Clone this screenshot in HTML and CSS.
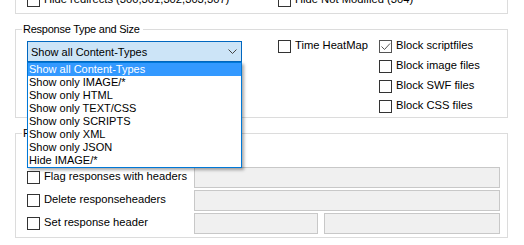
FILE: index.html
```html
<!DOCTYPE html>
<html>
<head>
<meta charset="utf-8">
<link rel="stylesheet" href="styles.css">
</head>
<body>
<div class="page">
  <div class="group-top">
    <label class="cb-label col-a"><span class="cb"></span><span class="txt">Hide redirects (300,301,302,303,307)</span></label>
    <label class="cb-label"><span class="cb"></span><span class="txt">Hide Not Modified (304)</span></label>
  </div>

  <fieldset class="group">
    <legend>Response Type and Size</legend>
    <div class="rts-body">
      <div class="combo-wrap">
        <div class="combo">
          <span>Show all Content-Types</span>
          <svg class="chev" width="9" height="5" viewBox="0 0 9 5"><polyline points="0.5,0.5 4.5,4.5 8.5,0.5" fill="none" stroke="#444" stroke-width="1"/></svg>
        </div>
        <ul class="dropdown">
          <li class="sel">Show all Content-Types</li>
          <li>Show only IMAGE/*</li>
          <li>Show only HTML</li>
          <li>Show only TEXT/CSS</li>
          <li>Show only SCRIPTS</li>
          <li>Show only XML</li>
          <li>Show only JSON</li>
          <li>Hide IMAGE/*</li>
        </ul>
      </div>
      <div class="heat">
        <label class="cb-label"><span class="cb"></span><span class="txt">Time HeatMap</span></label>
      </div>
      <div class="blocks">
        <label class="cb-label"><span class="cb checked"><svg width="11" height="11" viewBox="0 0 11 11"><polyline points="1.5,5.5 4.5,8.5 10,2.5" fill="none" stroke="#555" stroke-width="1"/></svg></span><span class="txt">Block scriptfiles</span></label>
        <label class="cb-label"><span class="cb"></span><span class="txt">Block image files</span></label>
        <label class="cb-label"><span class="cb"></span><span class="txt">Block SWF files</span></label>
        <label class="cb-label"><span class="cb"></span><span class="txt">Block CSS files</span></label>
      </div>
    </div>
  </fieldset>

  <fieldset class="group">
    <legend>Response Headers</legend>
    <div class="rh-body">
      <label class="cb-label"><span class="cb"></span><span class="txt">Flag responses with headers</span></label>
      <div class="tb"></div>
      <label class="cb-label"><span class="cb"></span><span class="txt">Delete responseheaders</span></label>
      <div class="tb"></div>
      <label class="cb-label"><span class="cb"></span><span class="txt">Set response header</span></label>
      <div class="tb-pair"><div class="tb tb-name"></div><div class="tb tb-value"></div></div>
    </div>
  </fieldset>
</div>
</body>
</html>
```

FILE: styles.css
```css
* { box-sizing: border-box; }
html, body { margin: 0; padding: 0; background: #fff; }
body {
  font-family: "Liberation Sans", Arial, sans-serif;
  font-size: 11px;
  color: #000;
  overflow: hidden;
}
.page { width: 493px; margin-left: 15px; }

.group-top {
  margin-top: -6px;
  border: 1px solid #dcdcdc;
  border-top: 0;
  padding: 0 0 6px 11px;
  display: flex;
}
.col-a { width: 251px; }

.cb-label {
  display: flex;
  align-items: center;
  height: 13px;
  white-space: nowrap;
  font-size: 11.2px;
}
.cb {
  width: 13px;
  height: 13px;
  border: 1px solid #333;
  background: #fff;
  margin-right: 4px;
  flex: none;
  display: flex;
  align-items: center;
  justify-content: center;
}
.cb.checked { border-color: #555; }
.txt { line-height: 13px; padding-bottom: 2px; }

fieldset.group {
  margin: 9px 0 0;
  padding: 0;
  border: 1px solid #dcdcdc;
  min-width: 0;
}
legend {
  margin-left: 6px;
  padding: 0 3px 0 1px;
  line-height: 13px;
  font-size: 11px;
  letter-spacing: -0.25px;
}

.rts-body { display: flex; padding: 4px 0 4px 11px; }
.combo-wrap { position: relative; width: 215px; height: 21px; margin-top: 1px; flex: none; }
.combo {
  height: 21px;
  border: 1px solid #0067c0;
  background: #cce4f7;
  display: flex;
  align-items: center;
  justify-content: space-between;
  padding-left: 3px;
}
.chev { margin-right: 4px; }
.dropdown {
  position: absolute;
  top: 21px;
  left: 0;
  width: 215px;
  margin: 0;
  padding: 0;
  list-style: none;
  background: #fff;
  border: 1px solid #0078d7;
  z-index: 5;
  box-shadow: 2px 2px 3px rgba(0,0,0,0.35);
}
.dropdown li { height: 13px; line-height: 13px; padding-left: 1px; white-space: nowrap; }
.dropdown li.sel { background: #3399ff; color: #fff; }

.heat { margin-left: 36px; width: 101px; flex: none; }
.blocks { display: flex; flex-direction: column; gap: 7px; }

.rh-body {
  display: grid;
  grid-template-columns: 167px 306px;
  grid-auto-rows: 21px;
  row-gap: 2px;
  align-items: center;
  padding: 27px 7px 3px 11px;
}
.tb { height: 21px; border: 1px solid #c8c8c8; background: #f0f0f0; }
.tb-pair { display: flex; gap: 6px; }
.tb-name { width: 124px; }
.tb-value { width: 176px; }
```
